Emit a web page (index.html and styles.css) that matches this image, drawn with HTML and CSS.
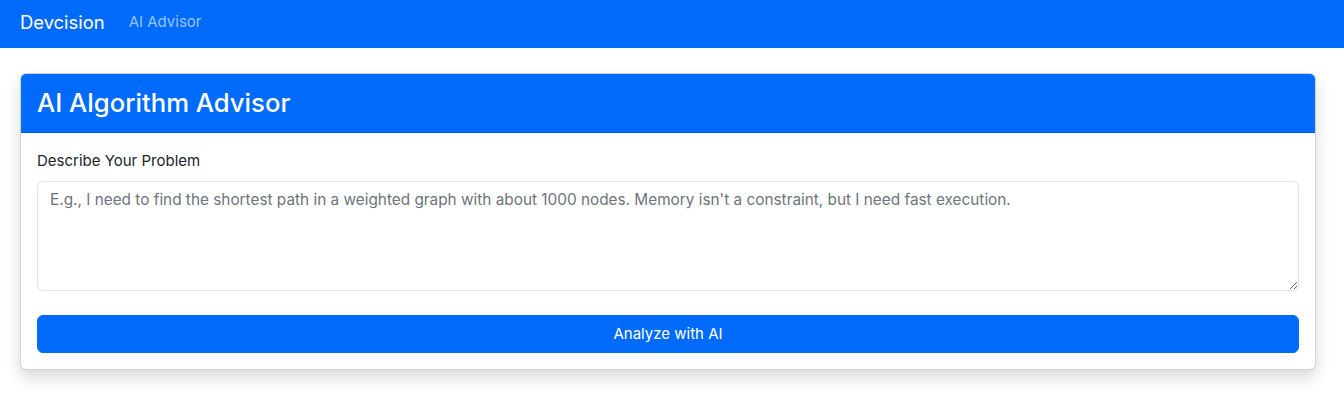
FILE: index.html
```html
<!DOCTYPE html>
<html lang="en">
<head>
<meta charset="utf-8">
<title>Devcision - AI Advisor</title>
<link rel="stylesheet" href="styles.css">
</head>
<body>
<nav class="navbar">
  <a class="brand" href="#">Devcision</a>
  <a class="nav-link" href="#">AI Advisor</a>
</nav>
<main class="page">
  <section class="card">
    <div class="card-header">
      <h3 class="card-title">AI Algorithm Advisor</h3>
    </div>
    <div class="card-body">
      <label class="form-label" for="problem">Describe Your Problem</label>
      <textarea id="problem" class="form-control" rows="4" placeholder="E.g., I need to find the shortest path in a weighted graph with about 1000 nodes. Memory isn't a constraint, but I need fast execution."></textarea>
      <button class="btn" type="button">Analyze with AI</button>
    </div>
  </section>
</main>
</body>
</html>
```

FILE: styles.css
```css
* { box-sizing: border-box; }
html, body { margin: 0; padding: 0; }
body {
  font-family: Inter, "Liberation Sans", Arial, sans-serif;
  font-size: 16px;
  line-height: 1.5;
  color: #212529;
  background: #fff;
}
.navbar {
  height: 48px;
  background: #006bfb;
  display: flex;
  align-items: center;
  padding: 0 20px 4px;
}
.brand {
  color: #fff;
  font-size: 18.4px;
  text-decoration: none;
  margin-right: 16px;
  line-height: 30px;
}
.nav-link {
  color: rgba(255,255,255,0.6);
  font-size: 15px;
  text-decoration: none;
  padding: 0 8px;
}
.page {
  padding: 25px 28px 40px 20px;
}
.card {
  width: 1296px;
  border: 1px solid rgba(0,0,0,0.175);
  border-radius: 6px;
  box-shadow: 0 8px 16px rgba(0,0,0,0.15);
  background: #fff;
  overflow: hidden;
}
.card-header {
  background: #006bfb;
  border-bottom: 1px solid rgba(0,0,0,0.12);
  padding: 12px 16px 12px;
}
.card-title {
  margin: 0;
  color: #fff;
  font-size: 25.7px;
  font-weight: 500;
  line-height: 34px;
}
.card-body {
  padding: 16px;
  display: flex;
  flex-direction: column;
}
.form-label {
  display: block;
  margin-bottom: 8px;
  font-size: 15px;
  line-height: 24px;
}
.form-control {
  display: block;
  width: 100%;
  height: 110px;
  padding: 6px 12px;
  font-family: inherit;
  font-size: 15.35px;
  line-height: 24px;
  color: #212529;
  border: 1px solid #dee2e6;
  border-radius: 6px;
  resize: vertical;
  margin: 0 0 24px;
}
.form-control::placeholder { color: #6c757d; opacity: 1; }
.btn {
  display: block;
  width: 100%;
  height: 38px;
  background: #006bfb;
  color: #fff;
  border: 1px solid #006bfb;
  border-radius: 6px;
  font-family: inherit;
  font-size: 15px;
  line-height: 24px;
  padding: 6px 12px;
  cursor: pointer;
}
```
